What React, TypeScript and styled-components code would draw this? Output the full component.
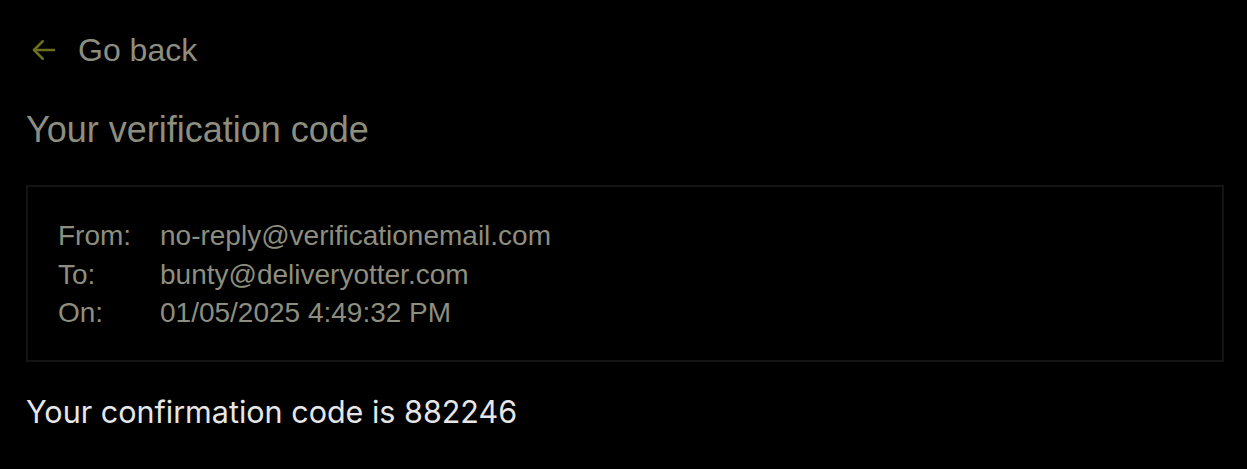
import React from "react";
import styled, { createGlobalStyle } from "styled-components";

const GlobalStyle = createGlobalStyle`
  html, body {
    margin: 0;
    padding: 0;
    background: #000;
  }
  body {
    font-family: "Liberation Sans", Arial, sans-serif;
  }
`;

const Page = styled.main`
  padding: 26px 23px 0 26px;
  color: #8d8e7f;
`;

const BackLink = styled.a`
  display: flex;
  align-items: center;
  gap: 19px;
  height: 48px;
  padding-left: 3px;
  font-size: 32px;
  color: #8d8e7f;
  text-decoration: none;
  cursor: pointer;
`;

const Title = styled.h1`
  margin: 32px 0 0;
  font-size: 36px;
  font-weight: 400;
  line-height: 48px;
  color: #8d8e7f;
`;

const HeaderBox = styled.section`
  margin-top: 31px;
  border: 2px solid #141414;
  padding: 30px 32px 27px 30px;
`;

const MetaGrid = styled.dl`
  display: grid;
  grid-template-columns: 102px 1fr;
  margin: 0;
  font-size: 28px;
  line-height: 38.5px;
`;

const Label = styled.dt`
  margin: 0;
`;

const Value = styled.dd`
  margin: 0;
`;

const Body = styled.p`
  margin: 30px 0 0;
  font-family: Inter, "Noto Sans", sans-serif;
  font-size: 30.5px;
  line-height: 40px;
  color: #e6e6e6;
`;

const ArrowIcon = () => (
  <svg width="30" height="30" viewBox="0 0 24 24" fill="none" stroke="#6b6f1e" strokeWidth="2" strokeLinecap="round" strokeLinejoin="round">
    <path d="M20 12H4" />
    <path d="M11 5l-7 7 7 7" />
  </svg>
);

const rows: [string, string][] = [
  ["From:", "no-reply@verificationemail.com"],
  ["To:", "bunty@deliveryotter.com"],
  ["On:", "01/05/2025 4:49:32 PM"],
];

export default function App() {
  return (
    <>
      <GlobalStyle />
      <Page>
        <BackLink>
          <ArrowIcon />
          Go back
        </BackLink>
        <Title>Your verification code</Title>
        <HeaderBox>
          <MetaGrid>
            {rows.map(([k, v]) => (
              <React.Fragment key={k}>
                <Label>{k}</Label>
                <Value>{v}</Value>
              </React.Fragment>
            ))}
          </MetaGrid>
        </HeaderBox>
        <Body>Your confirmation code is 882246</Body>
      </Page>
    </>
  );
}
